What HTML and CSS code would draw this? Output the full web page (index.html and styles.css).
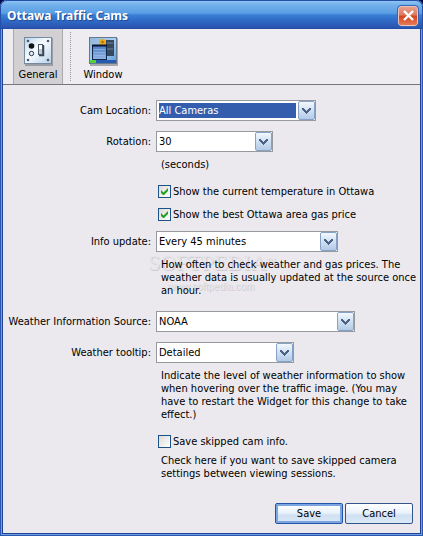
FILE: index.html
```html
<!DOCTYPE html>
<html lang="en">
<head>
<meta charset="utf-8">
<title>Ottawa Traffic Cams</title>
<link rel="stylesheet" href="styles.css">
</head>
<body>
<svg class="defs" aria-hidden="true">
  <defs>
    <linearGradient id="plate" x1="0" y1="0" x2="1" y2="1"><stop offset="0" stop-color="#b9d3ea"/><stop offset=".45" stop-color="#f8fcff"/><stop offset="1" stop-color="#b4cfe8"/></linearGradient>
    <linearGradient id="desk" x1="0" y1="0" x2="1" y2="1"><stop offset="0" stop-color="#8fb4d8"/><stop offset=".5" stop-color="#a9d0f0"/><stop offset="1" stop-color="#5c9ade"/></linearGradient>
    <linearGradient id="pane" x1="0" y1="0" x2="0" y2="1"><stop offset="0" stop-color="#4a7cc4"/><stop offset="1" stop-color="#93b4e6"/></linearGradient>
    <symbol id="chevron" viewBox="0 0 17 19"><path d="M4 7h2v1h1v1h1v1h1v-1h1v-1h1v-1h2v2h-1v1h-1v1h-1v1h-1v1h-1v-1h-1v-1h-1v-1h-1v-1h-1z" fill="#4d6185"/></symbol>
    <symbol id="tick" viewBox="0 0 13 13"><path d="M3 5v3l2 2h1l4-4V3L5.500 7.500z" fill="#21a121"/></symbol>
  </defs>
</svg>
<main class="window">
  <header class="titlebar">
    <h1>Ottawa Traffic Cams</h1>
    <button class="close" type="button" aria-label="Close"><svg width="13" height="13" viewBox="0 0 13 13"><path d="M2 2l9 9M11 2l-9 9" stroke="#fff" stroke-width="2.400"/></svg></button>
  </header>
  <nav class="toolbar">
    <button class="tab active" type="button">
      <svg width="29" height="29" viewBox="0 0 29 29">
        <rect x="1" y="1" width="28" height="28" fill="#9a9da3"/>
        <rect x=".5" y=".5" width="27" height="26" fill="url(#plate)" stroke="#75899f"/>
        <g fill="#4e5a6b"><circle cx="4" cy="4" r="1.300"/><circle cx="24" cy="4" r="1.300"/><circle cx="4" cy="23" r="1.300"/><circle cx="24" cy="23" r="1.300"/></g>
        <circle cx="7.500" cy="9" r="2.800" fill="#111"/>
        <circle cx="7.500" cy="16.500" r="2.200" fill="#dcecf9" stroke="#26364a"/>
        <path d="M15 18.500h4.500V8" fill="none" stroke="#3a4656" stroke-width="1.500"/>
        <rect x="14.500" y="7.500" width="4" height="10" fill="#fff" stroke="#4c5968"/>
        <rect x="15" y="12" width="3" height="5" fill="#bccbd9"/>
      </svg>
      <span>General</span>
    </button>
    <i class="divider"></i>
    <button class="tab" type="button">
      <svg width="29" height="29" viewBox="0 0 29 29">
        <rect x="1" y="1" width="28" height="28" fill="#a5a7ad"/>
        <rect x=".5" y=".5" width="27" height="26" fill="url(#desk)" stroke="#65788c"/>
        <circle cx="13.500" cy="5.500" r="3.500" fill="#eaa91e"/><circle cx="13.500" cy="5" r="1.200" fill="#a96d0b"/>
        <rect x="17" y="3" width="8" height="16" fill="#37495e"/><path d="M18 6h6M18 12h6" stroke="#71869c"/>
        <rect x="3.500" y="8.500" width="14" height="14" fill="url(#pane)" stroke="#14284c"/>
        <path d="M3 8.500h15" stroke="#0c1935" stroke-width="2"/><path d="M5 12.500h11M5 15.500h11M5 18.500h11" stroke="#aac5ee" stroke-opacity=".5"/>
        <rect x="1" y="23" width="26" height="3" fill="#255cb2"/><rect x="1" y="23" width="6" height="3" fill="#55d13d"/>
      </svg>
      <span>Window</span>
    </button>
  </nav>
  <form class="prefs">
    <div class="fields">
      <label class="caption" for="cam">Cam Location:</label>
      <div class="combo w-cam focused"><select id="cam"><option>All Cameras</option></select><span class="arrow"><svg><use href="#chevron"/></svg></span></div>

      <label class="caption" for="rotation">Rotation:</label>
      <div class="combo w-rotation"><select id="rotation"><option>30</option></select><span class="arrow"><svg><use href="#chevron"/></svg></span></div>
      <p class="note">(seconds)</p>
      <label class="check"><span class="box"><input type="checkbox" checked><svg><use href="#tick"/></svg></span>Show the current temperature in Ottawa</label>
      <label class="check"><span class="box"><input type="checkbox" checked><svg><use href="#tick"/></svg></span>Show the best Ottawa area gas price</label>

      <label class="caption" for="info">Info update:</label>
      <div class="combo w-info"><select id="info"><option>Every 45 minutes</option></select><span class="arrow"><svg><use href="#chevron"/></svg></span></div>
      <div class="note marked">
        <div class="watermark" aria-hidden="true"><span class="brand">SOFTPEDIA<sup>TM</sup></span><span class="site">www.softpedia.com</span></div>
        <p>How often to check weather and gas prices. The<br>weather data is usually updated at the source once<br>an hour.</p>
      </div>

      <label class="caption" for="source">Weather Information Source:</label>
      <div class="combo w-source"><select id="source"><option>NOAA</option></select><span class="arrow"><svg><use href="#chevron"/></svg></span></div>

      <label class="caption" for="tooltip">Weather tooltip:</label>
      <div class="combo w-tooltip"><select id="tooltip"><option>Detailed</option></select><span class="arrow"><svg><use href="#chevron"/></svg></span></div>
      <p class="note">Indicate the level of weather information to show<br>when hovering over the traffic image. (You may<br>have to restart the Widget for this change to take<br>effect.)</p>
      <label class="check"><span class="box"><input type="checkbox"><svg><use href="#tick"/></svg></span>Save skipped cam info.</label>
      <p class="note last">Check here if you want to save skipped camera<br>settings between viewing sessions.</p>
    </div>
    <footer class="actions">
      <button class="btn default" type="submit">Save</button>
      <button class="btn" type="button">Cancel</button>
    </footer>
  </form>
</main>
</body>
</html>
```
FILE: styles.css
```css
* { box-sizing: border-box; }
body {
  margin: 0;
  background: #07084a;
  color: #000;
  font: 11px/13px "DejaVu Sans Condensed", "DejaVu Sans", sans-serif;
}
p, h1 { margin: 0; }
button, select { font: inherit; color: inherit; }
svg { display: block; }
.defs { position: absolute; width: 0; height: 0; }

.window {
  display: flex;
  flex-direction: column;
  min-height: 100vh;
  padding: 0 3px 3px;
  border-radius: 7px 7px 0 0;
  background: #ebe9ee;
  box-shadow: inset 0 0 0 1px #2a58b0, inset 0 0 0 2px #6f9fe6, inset 0 0 0 3px #204290;
  overflow: hidden;
}
.titlebar {
  display: flex;
  align-items: center;
  justify-content: space-between;
  height: 29px;
  margin: 0 -3px;
  padding: 2px 6px 0;
  border: 1px solid #234fa8;
  border-radius: 7px 7px 0 0;
  background: linear-gradient(#8fc4f4 0, #72b0ec 4px, #5a9fe4 12px, #3a7fd4 14px, #2f6cc8 19px, #2a53b0 27px);
}
.titlebar h1 {
  color: #fff;
  font: bold 12px/18px "Noto Sans", sans-serif;
  text-shadow: 1px 1px #24498f;
}
.close {
  display: grid;
  place-items: center;
  width: 20px;
  height: 20px;
  margin-right: -2px;
  padding: 0;
  border: 1px solid #f0c2b8;
  border-radius: 3px;
  outline: 1px solid #3767b4;
  background: linear-gradient(#e8a08c 0, #dc7a60 45%, #d34420 50%, #e67a55 100%);
}
.toolbar {
  display: flex;
  height: 56px;
  padding-left: 10px;
  border-bottom: 1px solid #77767c;
  background: #eeecf1;
}
.tab {
  display: flex;
  flex-direction: column;
  align-items: center;
  gap: 2px;
  width: 50px;
  padding: 8px 0 0;
  border: 0;
  background: none;
}
.tab.active {
  border: solid #aaa9ac;
  border-width: 0 1px;
  background: #d2d0d3;
}
.divider { margin: 3px 7px; border-left: 1px dotted #98979c; }

.prefs { display: flex; flex: 1; flex-direction: column; padding: 15px 7px 9px 5px; }
.fields { display: grid; grid-template-columns: 143px 1fr; column-gap: 5px; }
.caption { height: 21px; line-height: 21px; text-align: right; white-space: nowrap; }
.fields > :not(.caption) { grid-column: 2; }
.combo { position: relative; height: 21px; max-width: 100%; margin-bottom: 10px; border: 1px solid #96999e; background: #fff; }
.combo select {
  appearance: none;
  display: block;
  width: 100%;
  height: 19px;
  padding: 0;
  border: 2px solid #fff;
  border-right-width: 19px;
  border-radius: 0;
  outline: 0;
  background: #fff;
}
.focused select { background: #345ead; color: #fff; }
.arrow {
  position: absolute;
  inset: 0 0 0 auto;
  width: 17px;
  border: 1px solid #86a3c7;
  border-radius: 2px;
  background: linear-gradient(#f2f8fe, #c9dcf1 60%, #b3cae6);
  pointer-events: none;
}
.arrow svg { width: 17px; height: 19px; margin: -1px; }
.w-cam { width: 160px; }
.w-rotation { width: 117px; margin-bottom: 6px; }
.w-info { width: 182px; margin-bottom: 6px; }
.w-source { width: 199px; }
.w-tooltip { width: 138px; margin-bottom: 6px; }

.note { margin: 0 0 14px; padding-left: 5px; white-space: nowrap; }
.last { margin: -4px 0 0; }
.check { display: flex; align-items: center; gap: 2px; margin: 0 0 10px 2px; }
.box { position: relative; width: 13px; height: 13px; }
.box input {
  appearance: none;
  display: block;
  width: 13px;
  height: 13px;
  margin: 0;
  border: 1px solid #1d5288;
  background: linear-gradient(135deg, #dcdbd6, #fff);
}
.box svg { position: absolute; inset: 0; display: none; width: 13px; height: 13px; pointer-events: none; }
.box input:checked + svg { display: block; }

.marked { position: relative; }
.marked p { position: relative; }
.watermark { position: absolute; top: -6px; left: -8px; text-shadow: 1px 1px #cfcdd2; color: #e6e4e9; }
.watermark span { display: block; }
.brand { font: 22px/22px "Liberation Serif", serif; }
.brand sup { font-size: 6px; line-height: 6px; }
.site { padding: 7px 0 0 20px; font: 10px/12px "Liberation Sans", sans-serif; }

.actions { display: flex; justify-content: flex-end; gap: 2px; margin-top: auto; }
.btn {
  width: 68px;
  height: 21px;
  padding: 0;
  border: 1px solid #34558b;
  border-radius: 2px;
  background: linear-gradient(#fff, #eaf2fb 45%, #d0e0f2 60%, #dbe8f6);
}
.btn.default { border-color: #2454a8; box-shadow: inset 0 0 0 2px #7ba5e0; }
```
